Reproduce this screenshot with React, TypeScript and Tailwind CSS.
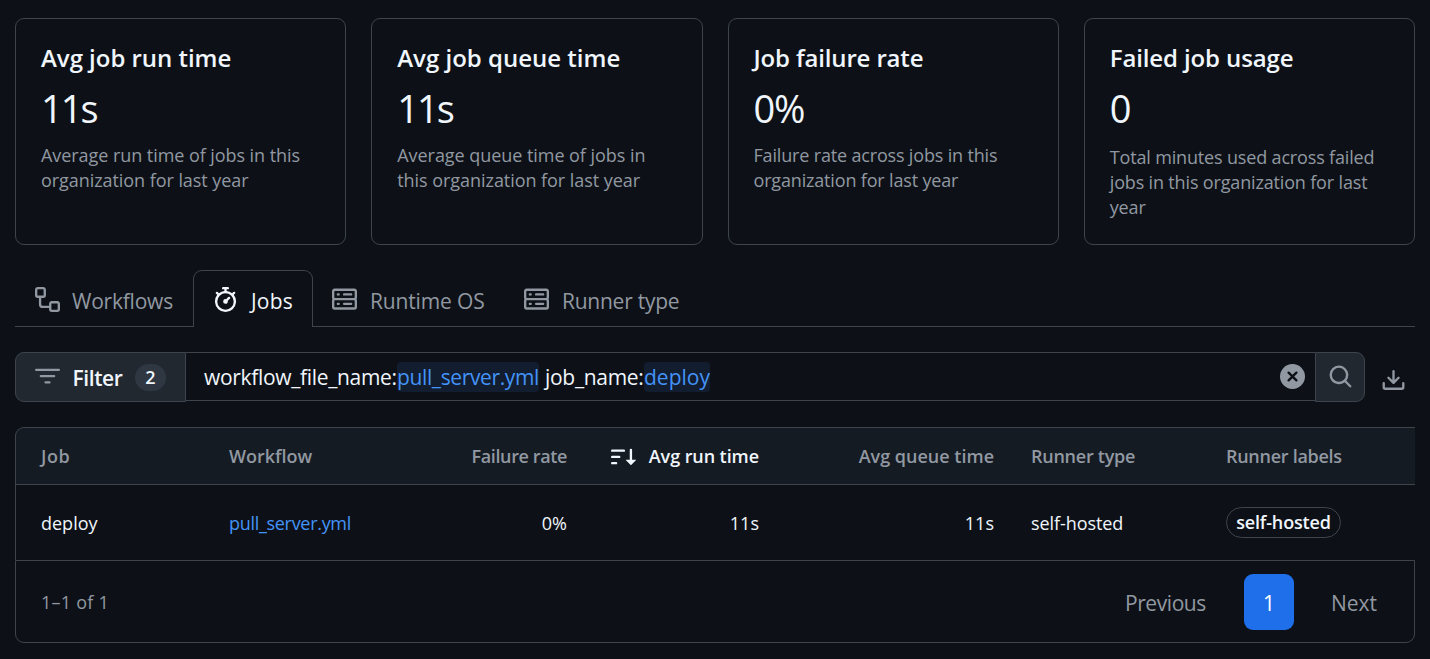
import type { ReactNode } from "react";

const icons = {
  workflow:
    "M0 1.75C0 .784.784 0 1.75 0h3.5C6.216 0 7 .784 7 1.75v3.5A1.75 1.75 0 0 1 5.25 7H4v4a1 1 0 0 0 1 1h4v-1.25C9 9.784 9.784 9 10.75 9h3.5c.966 0 1.75.784 1.75 1.75v3.5A1.75 1.75 0 0 1 14.25 16h-3.5A1.75 1.75 0 0 1 9 14.25v-.75H5A2.5 2.5 0 0 1 2.5 11V7h-.75A1.75 1.75 0 0 1 0 5.25Zm1.75-.25a.25.25 0 0 0-.25.25v3.5c0 .138.112.25.25.25h3.5a.25.25 0 0 0 .25-.25v-3.5a.25.25 0 0 0-.25-.25Zm9 9a.25.25 0 0 0-.25.25v3.5c0 .138.112.25.25.25h3.5a.25.25 0 0 0 .25-.25v-3.5a.25.25 0 0 0-.25-.25Z",
  stopwatch:
    "M5.75.75A.75.75 0 0 1 6.5 0h3a.75.75 0 0 1 0 1.5h-.75v1l-.001.041a6.724 6.724 0 0 1 3.464 1.435l.007-.006.75-.75a.749.749 0 0 1 1.275.326.749.749 0 0 1-.215.734l-.75.75-.006.007a6.75 6.75 0 1 1-10.548 0L2.72 5.03l-.75-.75a.751.751 0 0 1 .018-1.042.751.751 0 0 1 1.042-.018l.75.75.007.006A6.72 6.72 0 0 1 7.25 2.541V1.5H6.5a.75.75 0 0 1-.75-.75ZM8 14.5a5.25 5.25 0 1 0-.001-10.501A5.25 5.25 0 0 0 8 14.5Zm.389-6.7 1.33-1.33a.75.75 0 1 1 1.061 1.06L9.45 8.861A1.503 1.503 0 0 1 8 10.75a1.499 1.499 0 1 1 .389-2.95Z",
  server:
    "M1.75 1h12.5c.966 0 1.75.784 1.75 1.75v4c0 .372-.116.717-.314 1 .198.283.314.628.314 1v4a1.75 1.75 0 0 1-1.75 1.75H1.75A1.75 1.75 0 0 1 0 12.75v-4c0-.358.109-.707.314-1a1.739 1.739 0 0 1-.314-1v-4C0 1.784.784 1 1.75 1ZM1.5 2.75v4c0 .138.112.25.25.25h12.5a.25.25 0 0 0 .25-.25v-4a.25.25 0 0 0-.25-.25H1.75a.25.25 0 0 0-.25.25Zm.25 5.75a.25.25 0 0 0-.25.25v4c0 .138.112.25.25.25h12.5a.25.25 0 0 0 .25-.25v-4a.25.25 0 0 0-.25-.25ZM7 4.75A.75.75 0 0 1 7.75 4h4.5a.75.75 0 0 1 0 1.5h-4.5A.75.75 0 0 1 7 4.75ZM7.75 10h4.5a.75.75 0 0 1 0 1.5h-4.5a.75.75 0 0 1 0-1.5ZM3 4.75A.75.75 0 0 1 3.75 4h.5a.75.75 0 0 1 0 1.5h-.5A.75.75 0 0 1 3 4.75ZM3.75 10h.5a.75.75 0 0 1 0 1.5h-.5a.75.75 0 0 1 0-1.5Z",
  filter:
    "M.75 3h14.5a.75.75 0 0 1 0 1.5H.75a.75.75 0 0 1 0-1.5ZM3 7.75A.75.75 0 0 1 3.75 7h8.5a.75.75 0 0 1 0 1.5h-8.5A.75.75 0 0 1 3 7.75Zm3 4a.75.75 0 0 1 .75-.75h2.5a.75.75 0 0 1 0 1.5h-2.5a.75.75 0 0 1-.75-.75Z",
  search:
    "M10.68 11.74a6 6 0 0 1-7.922-8.982 6 6 0 0 1 8.982 7.922l3.04 3.04a.749.749 0 0 1-.326 1.275.749.749 0 0 1-.734-.215ZM11.5 7a4.499 4.499 0 1 0-8.997 0A4.499 4.499 0 0 0 11.5 7Z",
  clear:
    "M2.343 13.657A8 8 0 1 1 13.658 2.343 8 8 0 0 1 2.343 13.657ZM6.03 4.97a.751.751 0 0 0-1.042.018.751.751 0 0 0-.018 1.042L6.94 8 4.97 9.97a.749.749 0 0 0 .326 1.275.749.749 0 0 0 .734-.215L8 9.06l1.97 1.97a.749.749 0 0 0 1.275-.326.749.749 0 0 0-.215-.734L9.06 8l1.97-1.97a.749.749 0 0 0-.326-1.275.749.749 0 0 0-.734.215L8 6.94Z",
  download:
    "M2.75 14A1.75 1.75 0 0 1 1 12.25v-2.5a.75.75 0 0 1 1.5 0v2.5c0 .138.112.25.25.25h10.5a.25.25 0 0 0 .25-.25v-2.5a.75.75 0 0 1 1.5 0v2.5A1.75 1.75 0 0 1 13.25 14ZM7.25 7.689V2a.75.75 0 0 1 1.5 0v5.689l1.97-1.969a.749.749 0 1 1 1.06 1.06l-3.25 3.25a.749.749 0 0 1-1.06 0L4.22 6.78a.749.749 0 1 1 1.06-1.06l1.97 1.969Z",
  sortDesc:
    "M0 4.25a.75.75 0 0 1 .75-.75h7.5a.75.75 0 0 1 0 1.5H.75A.75.75 0 0 1 0 4.25Zm0 4a.75.75 0 0 1 .75-.75h4.5a.75.75 0 0 1 0 1.5H.75A.75.75 0 0 1 0 8.25Zm0 4a.75.75 0 0 1 .75-.75h2.5a.75.75 0 0 1 0 1.5H.75a.75.75 0 0 1-.75-.75ZM13.5 10h2.25a.25.25 0 0 1 .177.427l-3 3a.25.25 0 0 1-.354 0l-3-3A.25.25 0 0 1 9.75 10H12V3.75a.75.75 0 0 1 1.5 0V10Z",
};

function Icon({ name, className = "" }: { name: keyof typeof icons; className?: string }) {
  return (
    <svg viewBox="0 0 16 16" className={`size-[25px] shrink-0 fill-current ${className}`} aria-hidden="true">
      <path d={icons[name]} />
    </svg>
  );
}

const stats = [
  {
    title: "Avg job run time",
    value: "11s",
    titleClass: "tracking-[-0.03px]",
    valueClass: "tracking-[-2px]",
    textClass: "mt-[7px] tracking-[-0.06px]",
    lines: ["Average run time of jobs in this", "organization for last year"],
  },
  {
    title: "Avg job queue time",
    value: "11s",
    titleClass: "tracking-[0px]",
    valueClass: "tracking-[-2px]",
    textClass: "mt-[7px] tracking-[-0.05px]",
    lines: ["Average queue time of jobs in", "this organization for last year"],
  },
  {
    title: "Job failure rate",
    value: "0%",
    titleClass: "tracking-[-0.15px]",
    valueClass: "tracking-[-1.2px]",
    textClass: "mt-[7px] tracking-[-0.17px]",
    lines: ["Failure rate across jobs in this", "organization for last year"],
  },
  {
    title: "Failed job usage",
    value: "0",
    titleClass: "tracking-[-0.12px]",
    valueClass: "tracking-[-0.8px]",
    textClass: "mt-[9px] tracking-[-0.16px]",
    lines: ["Total minutes used across failed", "jobs in this organization for last", "year"],
  },
];

function StatCard({ title, value, titleClass, valueClass, textClass, lines }: (typeof stats)[number]) {
  return (
    <section className="h-[227px] rounded-[9px] border border-[#3d444d] pl-[25px] pt-[19px]">
      <h2 className={`text-[24px] font-semibold leading-[39px] ${titleClass}`}>{title}</h2>
      <p className={`mt-[3px] text-[38px] leading-[56px] ${valueClass}`}>{value}</p>
      <p className={`text-[18px] leading-[25px] text-[#9198a1] ${textClass}`}>
        {lines.map((line) => (
          <span key={line} className="block whitespace-nowrap">
            {line}
          </span>
        ))}
      </p>
    </section>
  );
}

function Tab({ icon, children, className }: { icon: keyof typeof icons; children: ReactNode; className: string }) {
  return (
    <button className={`flex h-[57px] items-center text-[21px] ${className}`}>
      <Icon name={icon} className="mb-px" />
      <span className="mt-1 whitespace-nowrap">{children}</span>
    </button>
  );
}

const row =
  "grid grid-cols-[188px_180px_158px_192px_235px_195px_1fr] items-center pl-[25px] text-[18px]";

export default function App() {
  return (
    <main className="h-[659px] w-[1430px] overflow-hidden bg-[#0d1117] pl-[15px] pr-[15px] pt-[18px] font-['Open_Sans',sans-serif] text-[#f0f6fc]">
      <div className="grid grid-cols-4 gap-[25px]">
        {stats.map((s) => (
          <StatCard key={s.title} {...s} />
        ))}
      </div>

      <nav className="mt-[25px] flex">
        <Tab icon="workflow" className="w-[178px] gap-3 border-b border-[#3d444d] pl-5 pt-1 tracking-[-0.22px] text-[#9198a1]">Workflows</Tab>
        <Tab icon="stopwatch" className="w-[120px] gap-[13px] rounded-t-[9px] border border-b-0 border-[#3d444d] pl-[19px] pt-0.5 tracking-[0.2px]">Jobs</Tab>
        <Tab icon="server" className="w-[192px] gap-[13px] border-b border-[#3d444d] pl-[19px] pt-1 tracking-[-0.15px] text-[#9198a1]">Runtime OS</Tab>
        <Tab icon="server" className="flex-1 gap-[13px] border-b border-[#3d444d] pl-[19px] pt-1 tracking-[-0.25px] text-[#9198a1]">Runner type</Tab>
      </nav>

      <div className="mt-[25px] flex h-[50px]">
        <button className="flex w-[171px] items-center rounded-l-[9px] border border-[#3d444d] bg-[#212830] pl-[19px]">
          <Icon name="filter" className="mb-px text-[#9198a1]" />
          <span className="ml-3 mt-1 w-[51px] text-[21px] font-semibold tracking-[-0.4px]">Filter</span>
          <span className="ml-3 flex h-[27px] w-[31px] items-center justify-center rounded-full bg-[#2f3742] text-[18px] font-semibold">2</span>
        </button>
        <div className="flex h-[49px] flex-1 items-center border-y border-[#3d444d] pl-[18px] pr-[10px]">
          <p className="flex whitespace-nowrap text-[21px] leading-[29px]">
            <span className="w-[193px] pt-px tracking-[-0.33px]">workflow_file_name:</span>
            <span className="w-[142px] rounded-[4px] bg-[#121d2f] pt-px leading-[28px] tracking-[-0.37px] text-[#4493f8]">pull_server.yml</span>
            <span className="ml-[6px] w-[99px] pt-px tracking-[-0.3px]">job_name:</span>
            <span className="rounded-[4px] bg-[#121d2f] pt-px leading-[28px] text-[#4493f8]">deploy</span>
          </p>
          <Icon name="clear" className="ml-auto text-[#9198a1]" />
        </div>
        <button className="flex w-[50px] items-center justify-center rounded-r-[9px] border border-[#3d444d] bg-[#212830] pb-px text-[#9198a1]">
          <Icon name="search" />
        </button>
        <button className="flex w-[50px] items-center pl-4 pt-[6px] text-[#9198a1]">
          <Icon name="download" />
        </button>
      </div>

      <div className="mt-[25px]">
        <div className={`${row} h-[58px] rounded-tl-[9px] border border-r-0 border-[#3d444d] bg-[#151b23] font-semibold text-[#9198a1]`}>
          <span className="tracking-[0.6px]">Job</span>
          <span>Workflow</span>
          <span className="text-right tracking-[-0.38px]">Failure rate</span>
          <span className="flex items-center justify-end gap-[13px] whitespace-nowrap tracking-[-0.08px] text-[#f0f6fc]">
            <Icon name="sortDesc" />
            Avg run time
          </span>
          <span className="text-right">Avg queue time</span>
          <span className="pl-[37px] tracking-[-0.25px]">Runner type</span>
          <span className="pl-[37px] tracking-[-0.28px]">Runner labels</span>
        </div>
        <div className={`${row} h-[75px] border-l border-[#3d444d]`}>
          <span className="pt-0.5">deploy</span>
          <a className="pt-0.5 tracking-[-0.3px] text-[#4493f8]">pull_server.yml</a>
          <span className="pt-0.5 text-right">0%</span>
          <span className="pt-0.5 text-right">11s</span>
          <span className="pt-0.5 text-right">11s</span>
          <span className="pl-[37px] pt-0.5 tracking-[-0.08px]">self-hosted</span>
          <span className="pl-[37px]">
            <span className="flex h-[31px] w-[115px] items-center justify-center rounded-full border border-[#3d444d] font-semibold tracking-[-0.15px]">self-hosted</span>
          </span>
        </div>
        <div className="flex h-[83px] items-center rounded-b-[9px] border border-[#3d444d] pl-[25px] pr-[37px] text-[#9198a1]">
          <span className="pt-0.5 text-[18px] tracking-[0.25px]">1–1 of 1</span>
          <div className="ml-auto flex items-center text-[21px]">
            <span className="mt-1 tracking-[-0.42px]">Previous</span>
            <span className="ml-[38px] flex h-14 w-[50px] items-center justify-center rounded-[9px] bg-[#1f6feb] pt-1 text-white">1</span>
            <span className="ml-[37px] mt-1">Next</span>
          </div>
        </div>
      </div>
    </main>
  );
}
